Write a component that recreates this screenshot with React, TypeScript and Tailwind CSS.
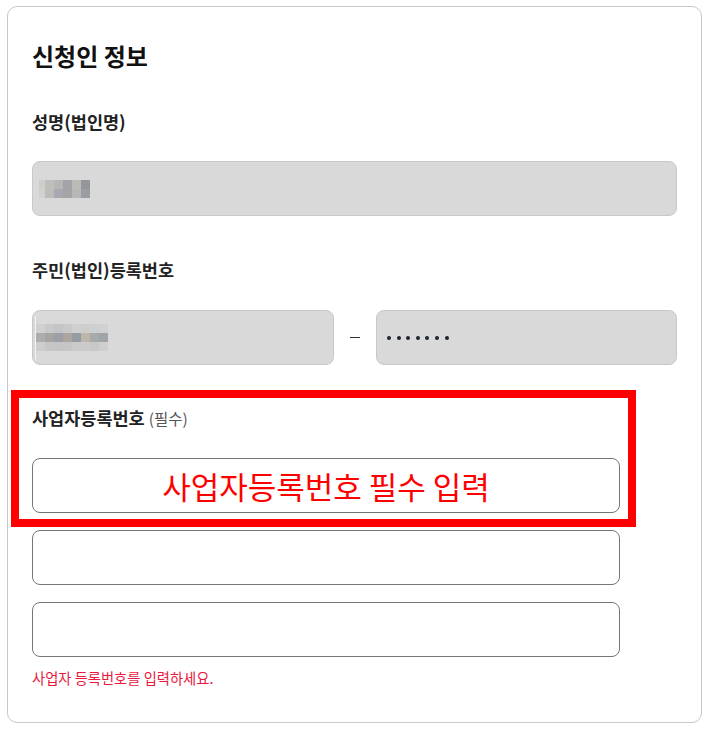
const nameBlur = [
  ["w-[6px] bg-[#cdcdcb]", "w-[9px] bg-[#bfbeba]", "w-[9px] bg-[#b6b6b6]", "w-[9px] bg-[#a3a4aa]", "w-[9px] bg-[#bcbbb7]", "w-[9px] bg-[#93969b]"],
  ["w-[6px] bg-[#d1d1cf]", "w-[9px] bg-[#bcbcb8]", "w-[9px] bg-[#a8a8b2]", "w-[9px] bg-[#a6a5a5]", "w-[9px] bg-[#b7b7b5]", "w-[9px] bg-[#9a9da1]"],
];

const idBlur = [
  ["bg-[#d0d0d0]", "bg-[#c8c9cb]", "bg-[#c4c5c7]", "bg-[#c9c9c9]", "bg-[#d0d0d0]", "bg-[#cfcdca]", "bg-[#cdd0d1]", "bg-[#d0d1d2]"],
  ["bg-[#adadad]", "bg-[#a7a59f]", "bg-[#9ca0a6]", "bg-[#aea59e]", "bg-[#969ca4]", "bg-[#beb6aa]", "bg-[#a5abad]", "bg-[#9fa4a8]"],
  ["bg-[#cdcdcd]", "bg-[#c6c6c6]", "bg-[#c4c5c7]", "bg-[#c6c6c6]", "bg-[#cacaca]", "bg-[#cbcbcb]", "bg-[#c8c8c8]", "bg-[#cfcfcf]"],
];

const Label = ({ children }: { children: React.ReactNode }) => (
  <div className="text-[17.5px] leading-[24px] font-bold text-[#222]">{children}</div>
);

const App = () => {
  return (
    <div className="bg-white min-h-[730px] pt-[6px] pl-[7px] font-['Noto_Sans_CJK_KR','Noto_Sans',sans-serif]">
      <div className="w-[695px] h-[717px] border border-[#c8c8c8] rounded-[10px] px-[24px] pt-[33px]">
        <h2 className="text-[24px] leading-[32px] font-bold text-[#111]">신청인 정보</h2>

        <div className="mt-[38px]">
          <Label>성명(법인명)</Label>
          <div className="mt-[27px] h-[55px] bg-[#d9d9d9] border border-[#c8c8c8] rounded-[8px] flex items-center pl-[6px]">
            <div className="flex flex-col">
              {nameBlur.map((row, i) => (
                <div key={i} className="flex h-[9px]">
                  {row.map((c, j) => (
                    <div key={j} className={c} />
                  ))}
                </div>
              ))}
            </div>
          </div>
        </div>

        <div className="mt-[42px]">
          <Label>주민(법인)등록번호</Label>
          <div className="mt-[28px] flex items-center">
            <div className="w-[302px] h-[55px] bg-[#d9d9d9] border border-[#c8c8c8] rounded-[8px] flex items-center pl-[2px]">
              <div className="w-px h-[44px] bg-[#f2f2f2]" />
              <div className="flex flex-col">
                {idBlur.map((row, i) => (
                  <div key={i} className="flex h-[9px]">
                    {row.map((c, j) => (
                      <div key={j} className={"w-[9px] " + c} />
                    ))}
                  </div>
                ))}
              </div>
            </div>
            <div className="w-[42px] flex justify-center">
              <div className="w-[10px] h-px bg-[#333]" />
            </div>
            <div className="w-[301px] h-[55px] bg-[#d9d9d9] border border-[#c8c8c8] rounded-[8px] flex items-center pl-[10px] gap-[5.6px]">
              {[0, 1, 2, 3, 4, 5, 6].map((i) => (
                <div key={i} className="w-[4px] h-[4px] rounded-full bg-[#1e2530]" />
              ))}
            </div>
          </div>
        </div>

        <div className="mt-[41px] relative">
          <div className="flex items-baseline">
            <Label>사업자등록번호</Label>
            <span className="ml-[4px] text-[15.5px] text-[#555]">(필수)</span>
          </div>
          <div className="mt-[28px] w-[588px] h-[55px] border border-[#767676] rounded-[8px] bg-white flex items-center justify-center">
            <span className="text-[31px] leading-none text-[#ff0000]">사업자등록번호 필수 입력</span>
          </div>
          <div className="absolute -left-[21px] -top-[16px] w-[625px] h-[137px] border-[8px] border-[#ff0000] pointer-events-none" />
        </div>

        <div className="mt-[17px] w-[588px] h-[55px] border border-[#767676] rounded-[8px] bg-white" />
        <div className="mt-[17px] w-[588px] h-[55px] border border-[#767676] rounded-[8px] bg-white" />

        <p className="mt-[11px] text-[14.3px] leading-[20px] text-[#e8183f]">사업자 등록번호를 입력하세요.</p>
      </div>
    </div>
  );
};

export default App;
